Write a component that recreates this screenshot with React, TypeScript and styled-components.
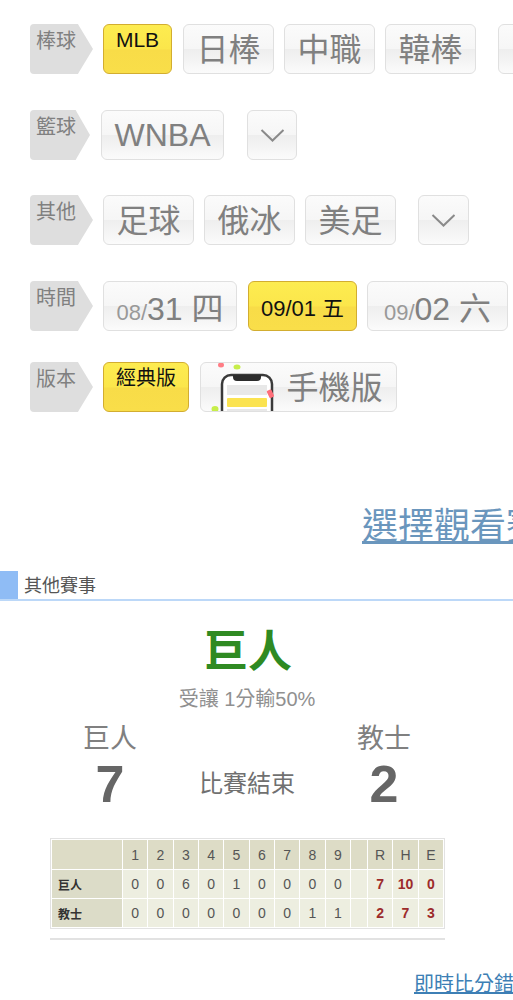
import React from "react";
import styled, { createGlobalStyle, css } from "styled-components";

const Global = createGlobalStyle`
  html, body { margin: 0; padding: 0; background: #fff; }
  body { width: 513px; height: 1000px; overflow: hidden; font-family: "Liberation Sans", "Noto Sans CJK TC", sans-serif; }
`;

const Page = styled.div`
  width: 513px;
  height: 1000px;
  overflow: hidden;
  padding-top: 24px;
  box-sizing: border-box;
  color: #777;
`;

const FilterList = styled.div`
  display: flex;
  flex-direction: column;
  padding-left: 30px;
`;

const Row = styled.div<{ $after: number }>`
  display: flex;
  height: 50px;
  width: 560px;
  margin-bottom: ${(p) => p.$after}px;
`;

const Tag = styled.div<{ $w: number }>`
  width: ${(p) => p.$w}px;
  height: 50px;
  flex: none;
  box-sizing: border-box;
  padding: 4px 0 0 6px;
  background: #dedede;
  border-radius: 4px;
  clip-path: polygon(0 0, 76% 0, 100% 50%, 76% 100%, 0 100%);
  font-size: 20px;
  line-height: 26px;
  color: #808080;
`;

const Button = styled.div<{ $w: number; $left: number; $on?: boolean; $raise?: boolean }>`
  width: ${(p) => p.$w}px;
  margin-left: ${(p) => p.$left}px;
  height: 50px;
  flex: none;
  box-sizing: border-box;
  border-radius: 6px;
  display: flex;
  align-items: center;
  justify-content: center;
  overflow: hidden;
  font-size: 32px;
  color: #808080;
  white-space: nowrap;
  border: 1px solid #e0e0e0;
  padding-bottom: ${(p) => (p.$raise ? 4 : 0)}px;
  background: linear-gradient(#fbfbfb 0%, #f6f6f6 49%, #eeeeee 50%, #f4f4f4 75%, #fbfbfb 100%);
  ${(p) =>
    p.$on &&
    css`
      color: #111;
      border: 1px solid #d2ad30;
      background: linear-gradient(#fdec50 0%, #fbe64b 50%, #f8dc48 52%, #f9de49 100%);
    `}
`;

const TopLabel = styled.span`
  align-self: flex-start;
  margin-top: 2px;
  font-size: 20px;
  line-height: 26px;
  color: #111;
`;

const MlbLabel = styled(TopLabel)`
  font-size: 21px;
`;

const Small = styled.span`
  font-size: 22px;
  color: #999;
`;

const DateText = styled.span`
  font-size: 22px;
`;

const PhoneArt = styled.svg`
  width: 84px;
  height: 48px;
  flex: none;
  display: block;
  align-self: flex-start;
`;

const PhoneSpacer = styled.span`
  width: 12px;
  flex: none;
`;

const Link = styled.a`
  display: block;
  white-space: nowrap;
  color: #6a96bd;
  text-decoration: underline;
  font-size: 36px;
  line-height: 40px;
  margin: 95px 0 0 362px;
`;

const Section = styled.div`
  display: flex;
  height: 28px;
  margin-top: 24px;
  border-bottom: 2px solid #bcd8f8;
`;

const SectionMark = styled.div`
  width: 18px;
  background: #8fbcf5;
  flex: none;
`;

const SectionTitle = styled.div`
  margin-left: 6px;
  font-size: 18px;
  line-height: 30px;
  color: #555;
`;

const Winner = styled.div`
  margin-top: 23px;
  width: 496px;
  text-align: center;
  font-size: 44px;
  line-height: 56px;
  font-weight: 700;
  color: #2f8a22;
`;

const Odds = styled.div`
  margin-top: 6px;
  width: 494px;
  text-align: center;
  font-size: 20px;
  line-height: 26px;
  color: #909090;
`;

const Score = styled.div`
  display: grid;
  grid-template-columns: 166px 108px 166px;
  margin: 10px 0 0 27px;
  text-align: center;
`;

const TeamName = styled.div`
  font-size: 27px;
  line-height: 34px;
  color: #808080;
`;

const Runs = styled.div`
  font-size: 52px;
  line-height: 56px;
  font-weight: 700;
  color: #666;
`;

const Status = styled.div`
  font-size: 24px;
  line-height: 56px;
  color: #707070;
`;

const Table = styled.table`
  margin: 26px 0 0 50px;
  width: 395px;
  box-sizing: border-box;
  table-layout: fixed;
  border-collapse: separate;
  border-spacing: 1px;
  border: 1px solid #e2e2e2;
  background: #fff;
`;

const Th = styled.th<{ $w?: number }>`
  ${(p) => p.$w && css`width: ${p.$w}px;`}
  height: 29px;
  padding: 0;
  background: #dddcc6;
  font-weight: 400;
  font-size: 14px;
  color: #555;
  text-align: center;
`;

const Name = styled.td`
  height: 28px;
  padding: 0 0 0 6px;
  background: #dcdcc8;
  font-size: 12px;
  font-weight: 700;
  color: #333;
`;

const Td = styled.td<{ $red?: boolean }>`
  padding: 0;
  background: #edeee0;
  text-align: center;
  font-size: 14px;
  color: ${(p) => (p.$red ? "#9c2b2b" : "#555")};
  font-weight: ${(p) => (p.$red ? 700 : 400)};
`;

const Rule = styled.div`
  margin: 9px 0 0 50px;
  width: 395px;
  height: 2px;
  background: #e2e2e2;
`;

const ErrorLink = styled.a`
  display: block;
  white-space: nowrap;
  margin: 31px 0 0 414px;
  font-size: 20px;
  line-height: 26px;
  color: #3d7fb5;
  text-decoration: underline;
`;

const Chevron = () => (
  <svg width="25" height="15" viewBox="0 0 25 15" fill="none" stroke="#8a8a8a" strokeWidth="2">
    <path d="M1.5 2 L12.5 12.5 L23.5 2" />
  </svg>
);

const Phone = () => (
  <PhoneArt viewBox="0 0 84 48">
    <rect x="20" y="12" width="50" height="50" rx="9" fill="#fff" stroke="#3a3a3a" strokeWidth="2.5" />
    <path d="M31 12 h28 v2 a4 4 0 0 1 -4 4 h-20 a4 4 0 0 1 -4 -4 z" fill="#2c2c2c" />
    <rect x="25" y="22" width="40" height="10" fill="#e8e8e8" />
    <rect x="25" y="35" width="40" height="9" rx="1" fill="#fbe350" />
    <rect x="25" y="46" width="40" height="4" fill="#e8e8e8" />
    <ellipse cx="19" cy="2" rx="3" ry="2.5" fill="#ff7d85" />
    <ellipse cx="35" cy="4" rx="3.5" ry="2.5" fill="#c7ee4a" />
    <rect x="66" y="27" width="5" height="8" rx="1" fill="#ff6f7a" transform="rotate(-25 68 31)" />
    <ellipse cx="13" cy="46" rx="3.5" ry="3" fill="#c7ee4a" />
  </PhoneArt>
);

const innings = [1, 2, 3, 4, 5, 6, 7, 8, 9];
const lines = [
  { name: "巨人", runs: [0, 0, 6, 0, 1, 0, 0, 0, 0], total: [7, 10, 0] },
  { name: "教士", runs: [0, 0, 0, 0, 0, 0, 0, 1, 1], total: [2, 7, 3] },
];

export default function App() {
  return (
    <Page>
      <Global />
      <FilterList>
        <Row $after={36}>
          <Tag $w={63}>棒球</Tag>
          <Button $w={69} $left={10} $on><MlbLabel>MLB</MlbLabel></Button>
          <Button $w={91} $left={11} $raise>日棒</Button>
          <Button $w={91} $left={10} $raise>中職</Button>
          <Button $w={91} $left={10} $raise>韓棒</Button>
          <Button $w={60} $left={22}><Chevron /></Button>
        </Row>
        <Row $after={35}>
          <Tag $w={60}>籃球</Tag>
          <Button $w={123} $left={11}>WNBA</Button>
          <Button $w={50} $left={23}><Chevron /></Button>
        </Row>
        <Row $after={36}>
          <Tag $w={63}>其他</Tag>
          <Button $w={91} $left={10} $raise>足球</Button>
          <Button $w={91} $left={10} $raise>俄冰</Button>
          <Button $w={91} $left={10} $raise>美足</Button>
          <Button $w={51} $left={22}><Chevron /></Button>
        </Row>
        <Row $after={31}>
          <Tag $w={63}>時間</Tag>
          <Button $w={134} $left={10}><span><Small>08/</Small>31 四</span></Button>
          <Button $w={109} $left={11} $on><DateText>09/01 五</DateText></Button>
          <Button $w={141} $left={10}><span><Small>09/</Small>02 六</span></Button>
        </Row>
        <Row $after={0}>
          <Tag $w={63}>版本</Tag>
          <Button $w={86} $left={10} $on><TopLabel>經典版</TopLabel></Button>
          <Button $w={197} $left={11} $raise><Phone />手機版<PhoneSpacer /></Button>
        </Row>
      </FilterList>

      <Link>選擇觀看賽事</Link>

      <Section>
        <SectionMark />
        <SectionTitle>其他賽事</SectionTitle>
      </Section>

      <Winner>巨人</Winner>
      <Odds>受讓 1分輸50%</Odds>
      <Score>
        <TeamName>巨人</TeamName>
        <div />
        <TeamName>教士</TeamName>
        <Runs>7</Runs>
        <Status>比賽結束</Status>
        <Runs>2</Runs>
      </Score>

      <Table>
        <thead>
          <tr>
            <Th $w={70} />
            {innings.map((n) => <Th key={n}>{n}</Th>)}
            <Th $w={16} />
            <Th>R</Th>
            <Th>H</Th>
            <Th>E</Th>
          </tr>
        </thead>
        <tbody>
          {lines.map((l) => (
            <tr key={l.name}>
              <Name>{l.name}</Name>
              {l.runs.map((r, i) => <Td key={i}>{r}</Td>)}
              <Td />
              {l.total.map((t, i) => <Td key={i} $red>{t}</Td>)}
            </tr>
          ))}
        </tbody>
      </Table>
      <Rule />
      <ErrorLink>即時比分錯誤回報</ErrorLink>
    </Page>
  );
}
